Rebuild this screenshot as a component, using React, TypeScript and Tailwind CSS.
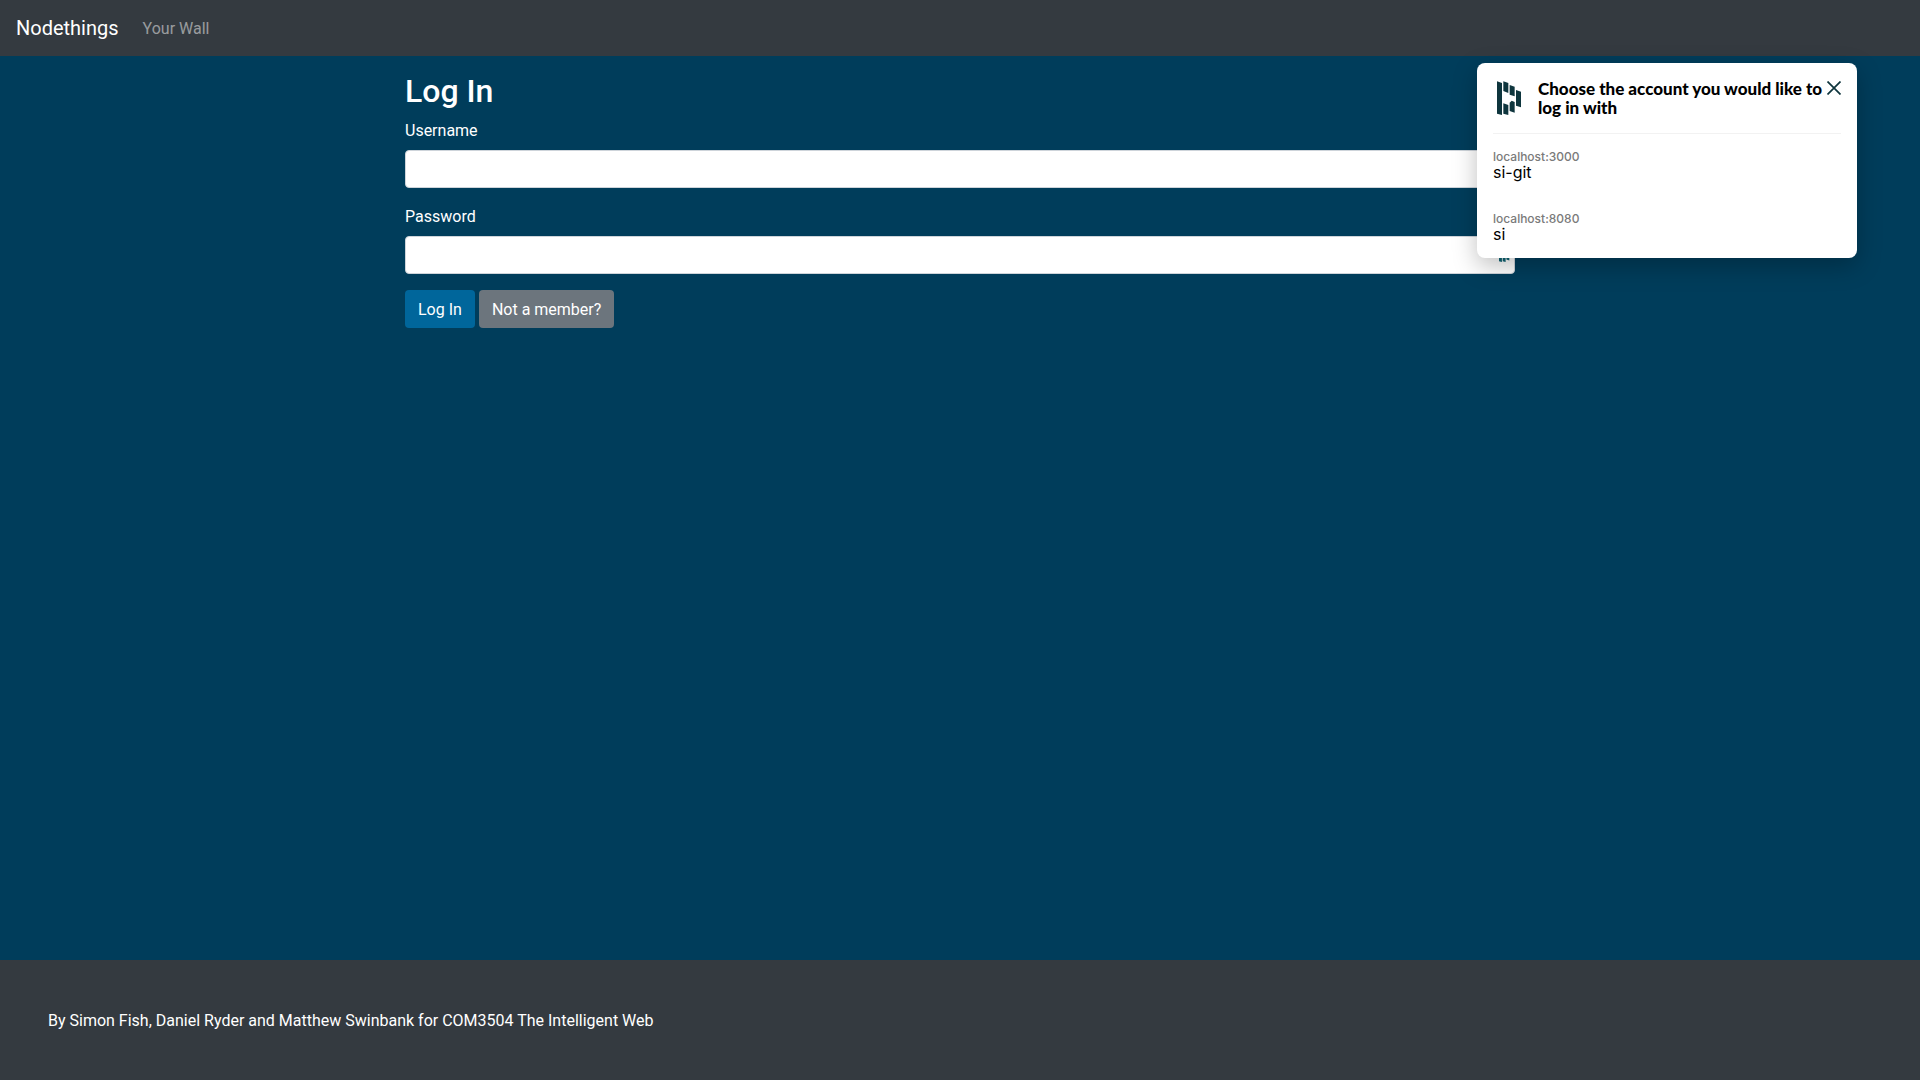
const accounts = [
  { host: 'localhost:3000', login: 'si-git' },
  { host: 'localhost:8080', login: 'si' },
];

function VaultLogo({ className }: { className: string }) {
  return (
    <svg viewBox="36 28 72 102" className={className} fill="currentColor" aria-hidden="true">
      <path d="M36 29L51 34V130L36 126Z" />
      <path d="M55 29L70 34V64L55 58Z" />
      <path d="M74 40L89 45V74L74 69Z" />
      <path d="M93 55L108 60V107L93 102Z" />
      <path d="M55 95L70 100V130L55 126Z" />
      <path d="M74 93L80 87L89 91V123L74 118Z" />
    </svg>
  );
}

function AccountPicker() {
  return (
    <aside className="absolute top-[63px] right-[63px] h-[195px] w-[380px] rounded-lg bg-white px-4 font-[Inter,sans-serif] text-black shadow-[0_8px_24px_rgba(0,0,0,0.25)]">
      <div className="flex h-[71px] items-start border-b border-[#f2f2f2] pt-4">
        <VaultLogo className="mt-[2px] ml-1 h-[34px] w-6 shrink-0 text-[#0e353d]" />
        <h2 className="ml-[17px] flex-1 font-[Lato,sans-serif] text-[17px] leading-[19px] font-black whitespace-nowrap">
          Choose the account you would like to
          <br />
          log in with
        </h2>
        <button type="button" aria-label="Close" className="mt-[2px] -ml-4 shrink-0 text-[#0e353d]">
          <svg viewBox="0 0 14 14" className="h-[14px] w-[14px]" fill="none" stroke="currentColor" strokeWidth="1.7">
            <path d="M0.5 0.5L13.5 13.5M13.5 0.5L0.5 13.5" />
          </svg>
        </button>
      </div>
      <ul className="flex flex-col gap-8 pt-4">
        {accounts.map((account) => (
          <li key={account.host}>
            <button type="button" className="block w-full text-left">
              <span className="block text-xs leading-[14px] font-medium text-[#7a7a7a]">{account.host}</span>
              <span className="block text-base leading-4">{account.login}</span>
            </button>
          </li>
        ))}
      </ul>
    </aside>
  );
}

export default function App() {
  return (
    <div className="relative flex min-h-screen flex-col bg-[#003d5b] font-[Roboto,sans-serif] text-base leading-[26px] text-white">
      <nav className="flex h-14 items-center gap-6 bg-[#343a40] px-4">
        <a href="#" className="text-xl">
          Nodethings
        </a>
        <a href="#wall" className="pt-0.5 text-white/50">
          Your Wall
        </a>
      </nav>
      <main className="mx-auto w-full max-w-[1140px] flex-1 px-[15px] pt-4">
        <h1 className="mb-2 text-[32px] leading-[38px] font-medium">Log In</h1>
        <form>
          <label htmlFor="username" className="mb-1.5 block">
            Username
          </label>
          <input
            id="username"
            type="text"
            className="mb-4 block h-[38px] w-full rounded border border-[#ced4da] bg-white px-3 text-[#495057]"
          />
          <label htmlFor="password" className="mb-1.5 block">
            Password
          </label>
          <div className="relative mb-4">
            <input
              id="password"
              type="password"
              className="block h-[38px] w-full rounded border border-[#ced4da] bg-white px-3 text-[#495057]"
            />
            <VaultLogo className="absolute top-1.5 right-0.5 h-5 w-[14px] text-[#0e6575]" />
          </div>
          <div className="flex gap-1">
            <button type="submit" className="h-[38px] rounded bg-[#00669b] px-[13px] pt-0.5">
              Log In
            </button>
            <button type="button" className="h-[38px] rounded bg-[#6c757d] px-[13px] pt-0.5">
              Not a member?
            </button>
          </div>
        </form>
      </main>
      <footer className="bg-[#343a40] px-12 pt-12 pb-[46px]">
        <p>By Simon Fish, Daniel Ryder and Matthew Swinbank for COM3504 The Intelligent Web</p>
      </footer>
      <AccountPicker />
    </div>
  );
}
